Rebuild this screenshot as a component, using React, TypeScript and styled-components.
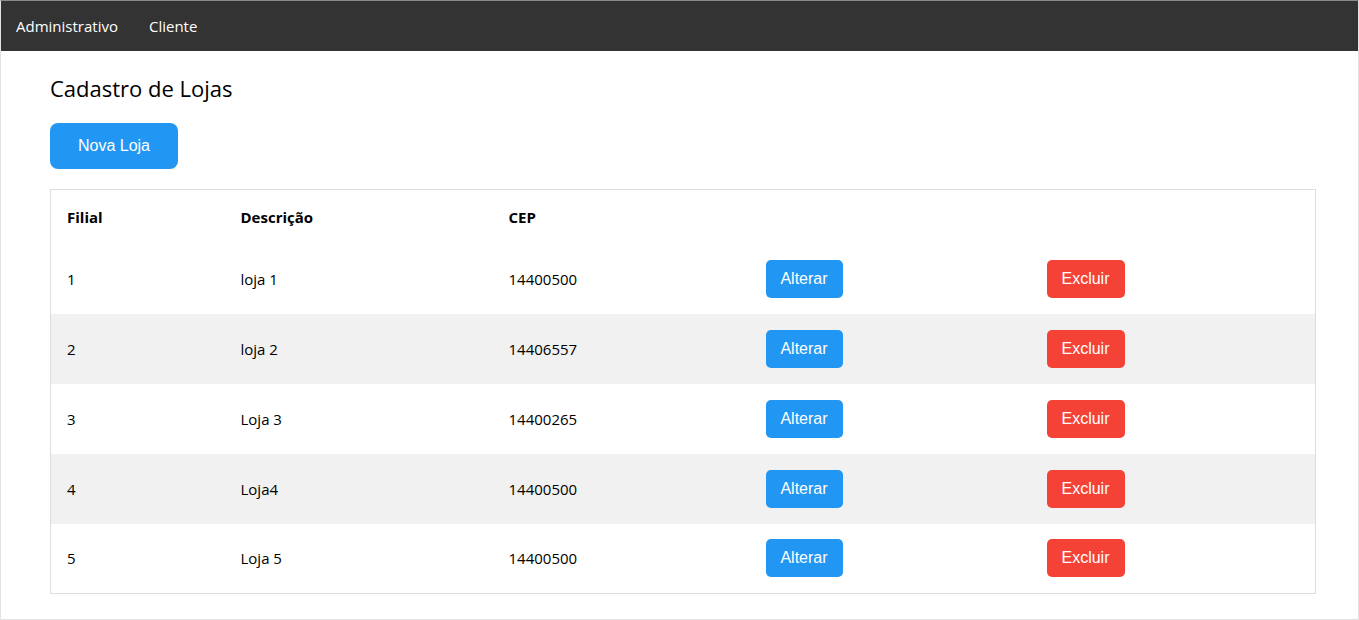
import React from "react";
import styled, { createGlobalStyle } from "styled-components";

const Global = createGlobalStyle`
  html, body { margin: 0; padding: 0; background: #fff; }
  body { font-family: "Open Sans", "Noto Sans", sans-serif; font-size: 15px; color: #000; }
  * { box-sizing: border-box; }
`;

const Frame = styled.div`
  height: 620px;
  border: 1px solid #e2e2e2;
  border-top-color: #8a8a8a;
  overflow: hidden;
`;

const NavBar = styled.nav`
  display: flex;
  height: 50px;
  background: #333;
`;

const NavItem = styled.a`
  display: flex;
  align-items: center;
  padding: 0 16px 0 15px;
  color: #fff;
  font-size: 15px;
  text-decoration: none;
`;

const Main = styled.main`
  padding: 22px 42px 0 49px;
  display: flex;
  flex-direction: column;
  align-items: flex-start;
`;

const Title = styled.h3`
  margin: 0 0 20px;
  font-size: 22px;
  font-weight: 400;
  line-height: 30px;
`;

const Button = styled.button<{ $variant: "blue" | "red"; $big?: boolean; $w: number }>`
  font-family: "Liberation Sans", Arial, sans-serif;
  font-size: 16px;
  color: #fff;
  border: none;
  cursor: pointer;
  white-space: nowrap;
  padding: 0;
  background: ${(p) => (p.$variant === "blue" ? "#2196F3" : "#f44336")};
  border-radius: ${(p) => (p.$big ? "8px" : "5px")};
  height: ${(p) => (p.$big ? "46px" : "38px")};
  width: ${(p) => p.$w}px;
`;

const Table = styled.table`
  margin-top: 20px;
  width: 100%;
  border-collapse: collapse;
  border: 1px solid #ddd;
  font-size: 15px;
`;

const HeadCell = styled.th<{ $w?: number }>`
  text-align: left;
  font-weight: 700;
  padding: 0 16px;
  height: 54px;
  width: ${(p) => (p.$w ? `${p.$w}px` : "auto")};
`;

const Row = styled.tr<{ $striped: boolean }>`
  background: ${(p) => (p.$striped ? "#f1f1f1" : "#fff")};
`;

const Cell = styled.td`
  padding: 0 16px;
  height: 70px;
  vertical-align: middle;
`;

const lojas = [
  { filial: 1, desc: "loja 1", cep: "14400500" },
  { filial: 2, desc: "loja 2", cep: "14406557" },
  { filial: 3, desc: "Loja 3", cep: "14400265" },
  { filial: 4, desc: "Loja4", cep: "14400500" },
  { filial: 5, desc: "Loja 5", cep: "14400500" },
];

export default function App() {
  return (
    <>
      <Global />
      <Frame>
        <NavBar>
          <NavItem href="#">Administrativo</NavItem>
          <NavItem href="#">Cliente</NavItem>
        </NavBar>
        <Main>
          <Title>Cadastro de Lojas</Title>
          <Button $variant="blue" $big $w={128}>Nova Loja</Button>
          <Table>
            <thead>
              <tr>
                <HeadCell $w={174}>Filial</HeadCell>
                <HeadCell $w={268}>Descrição</HeadCell>
                <HeadCell $w={257}>CEP</HeadCell>
                <HeadCell $w={281}></HeadCell>
                <HeadCell></HeadCell>
              </tr>
            </thead>
            <tbody>
              {lojas.map((l, i) => (
                <Row key={l.filial} $striped={i % 2 === 1}>
                  <Cell>{l.filial}</Cell>
                  <Cell>{l.desc}</Cell>
                  <Cell>{l.cep}</Cell>
                  <Cell>
                    <Button $variant="blue" $w={77}>Alterar</Button>
                  </Cell>
                  <Cell>
                    <Button $variant="red" $w={78}>Excluir</Button>
                  </Cell>
                </Row>
              ))}
            </tbody>
          </Table>
        </Main>
      </Frame>
    </>
  );
}
